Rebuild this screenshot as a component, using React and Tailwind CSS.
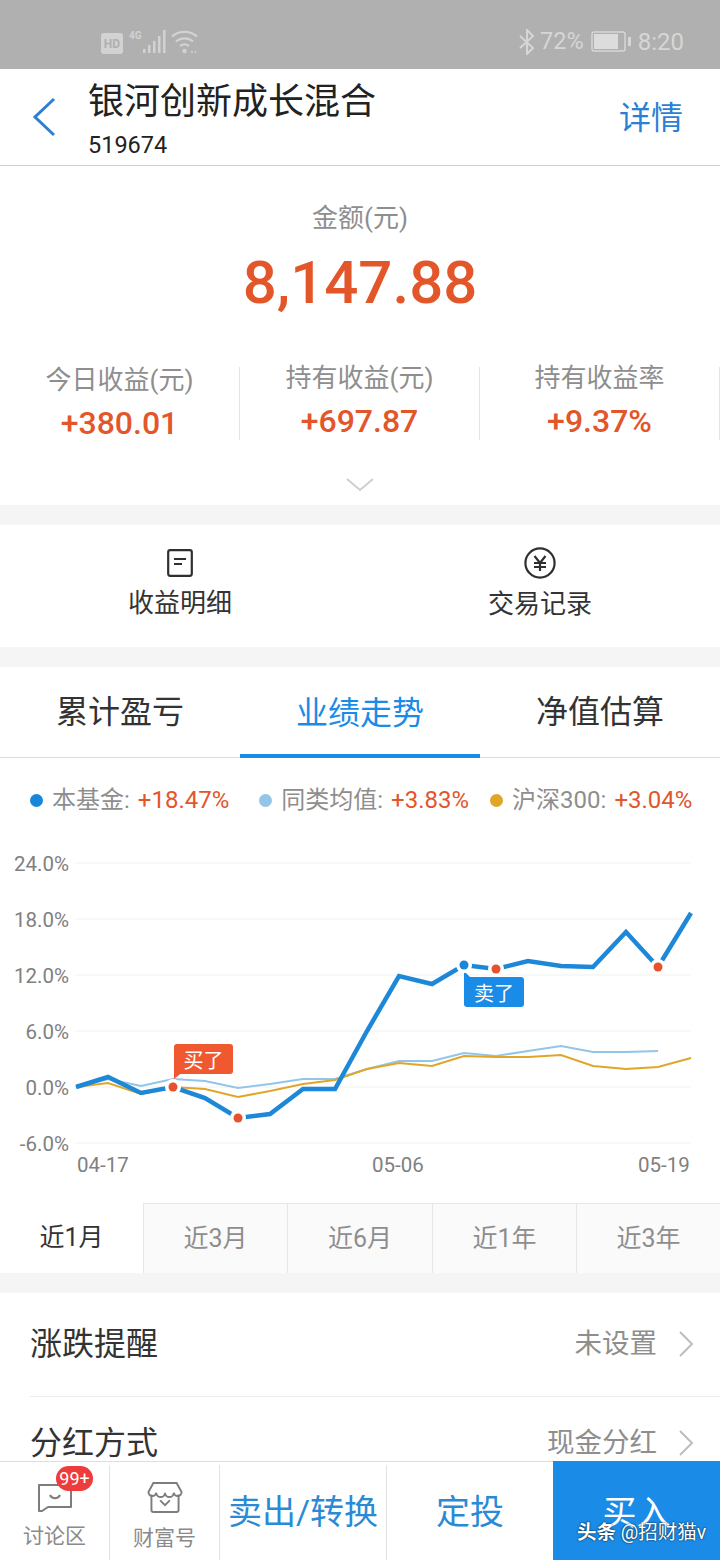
const FONT = "font-['Roboto','Noto_Sans_CJK_SC',sans-serif]";

const xs = [76,108,141,173,205,238,270,303,335,367,399,432,464,496,528,561,593,626,658,691];
const blue = [1087,1077,1093,1087,1098,1118,1114,1089,1089,1031,976,984,965,969,961,966,967,932,967,913];
const light = [1087,1079,1086,1079,1081,1088,1084,1079,1079,1069,1061,1061,1053,1056,1051,1046,1052,1052,1051];
const gold = [1087,1083,1094,1087,1089,1097,1091,1084,1080,1069,1063,1066,1056,1057,1057,1055,1066,1069,1067,1058];
const pts = (ys) => ys.map((y, i) => `${xs[i]},${y - 840}`).join(" ");

function StatusBar() {
  return (
    <div className="h-[69px] shrink-0 bg-[#b0b0b0] flex items-center justify-between pl-[100px] pr-[36px] pt-[14px] text-[#d6d6d6]">
      <div className="flex items-end gap-[3px]">
        <svg width="98" height="30" viewBox="0 0 98 30">
          <rect x="1" y="6" width="22" height="21" rx="3" fill="#d2d2d2" />
          <text x="12" y="21" textAnchor="middle" fontSize="12" fontWeight="700" fontFamily="Roboto" fill="#b0b0b0">HD</text>
          <text x="29" y="12" fontSize="10" fontWeight="700" fontFamily="Roboto" fill="#d2d2d2">4G</text>
          <g fill="#d2d2d2">
            <rect x="43" y="22" width="2.5" height="4" />
            <rect x="48" y="18" width="2.5" height="8" />
            <rect x="53" y="14" width="2.5" height="12" />
            <rect x="58" y="9" width="2.5" height="17" />
            <rect x="63" y="3" width="2.5" height="23" />
          </g>
          <g fill="none" stroke="#d2d2d2" strokeWidth="2.2">
            <path d="M72 9.5a19 19 0 0 1 25 0" />
            <path d="M76 14.5a13 13 0 0 1 17 0" />
            <path d="M80 19a7 7 0 0 1 9 0" />
          </g>
          <circle cx="84.5" cy="24" r="2.2" fill="#d2d2d2" />
          <circle cx="92" cy="25" r="1" fill="#d2d2d2" />
          <circle cx="95.5" cy="25" r="1" fill="#d2d2d2" />
        </svg>
      </div>
      <div className="flex items-center leading-none">
        <svg width="18" height="26" viewBox="0 0 18 26" fill="none" stroke="#d6d6d6" strokeWidth="2" className="mr-[4px]">
          <path d="M2 7l13 12-6 6V1l6 6L2 19" />
        </svg>
        <span className="text-[23.5px]">72%</span>
        <svg width="40" height="22" viewBox="0 0 40 22" className="ml-[7px]">
          <rect x="1" y="1" width="33" height="19" rx="2" fill="none" stroke="#d6d6d6" strokeWidth="1.5" />
          <rect x="3" y="3" width="24" height="15" fill="#dcdcdc" />
          <rect x="37" y="6" width="3" height="9" fill="#d6d6d6" />
        </svg>
        <span className="ml-[7px] text-[24px]">8:20</span>
      </div>
    </div>
  );
}

function Header() {
  return (
    <div className="h-[97px] shrink-0 bg-white border-b border-[#cfcfcf] flex items-start relative pl-[88px] pr-[37px]">
      <svg width="26" height="40" viewBox="0 0 26 40" fill="none" stroke="#2a7fd6" strokeWidth="3" className="absolute left-[31px] top-[28px]">
        <path d="M23 2L4 20l19 18" />
      </svg>
      <div className="flex-1 min-w-0">
        <div className="text-[36px] leading-[42px] mt-[12px] text-[#222]">银河创新成长混合</div>
        <div className="text-[23.5px] leading-[28px] mt-[8px] text-[#222]">519674</div>
      </div>
      <div className="text-[32px] leading-[40px] mt-[29px] text-[#2a7fd6]">详情</div>
    </div>
  );
}

function Stat({ label, value, first }) {
  return (
    <div className="flex-1 h-[73px] border-r border-[#e4e4e4] flex flex-col items-center">
      <div className={first ? "text-[26px] leading-[30px] text-[#8e8e8e] mt-[-2px]" : "text-[26px] leading-[30px] text-[#8e8e8e] mt-[-4px]"}>{label}</div>
      <div className="text-[32px] leading-[40px] mt-[8px] font-medium text-[#e2562a]">{value}</div>
    </div>
  );
}

function Summary() {
  return (
    <div className="h-[339px] shrink-0 bg-white flex flex-col items-center">
      <div className="text-[26px] leading-[30px] text-[#8e8e8e] mt-[37px]">金额(元)</div>
      <div className="text-[60px] leading-[70px] font-medium text-[#e2562a] mt-[15px]">8,147.88</div>
      <div className="flex w-full mt-[49px]">
        <Stat first label="今日收益(元)" value="+380.01" />
        <Stat label="持有收益(元)" value="+697.87" />
        <Stat label="持有收益率" value="+9.37%" />
      </div>
      <svg width="28" height="14" viewBox="0 0 28 14" fill="none" stroke="#cfcfcf" strokeWidth="2" className="mt-[38px]">
        <path d="M1 1l13 11L27 1" />
      </svg>
    </div>
  );
}

function Actions() {
  return (
    <div className="h-[122px] shrink-0 bg-white flex mt-[20px]">
      <div className="flex-1 flex flex-col items-center pt-[24px]">
        <svg width="26" height="28" viewBox="0 0 26 28" fill="none" stroke="#2f2f2f" strokeWidth="2.2">
          <rect x="1.2" y="1.2" width="23.6" height="25.6" rx="2" />
          <path d="M7 10h12M7 15h8" />
        </svg>
        <div className="text-[26px] leading-[30px] mt-[11px] text-[#333]">收益明细</div>
      </div>
      <div className="flex-1 flex flex-col items-center pt-[22px]">
        <svg width="32" height="32" viewBox="0 0 32 32" fill="none" stroke="#2f2f2f" strokeWidth="2.2">
          <circle cx="16" cy="16" r="14.6" />
          <path d="M10.5 9l5.5 7 5.5-7M16 16v8M10 16h12M10 20h12" />
        </svg>
        <div className="text-[26px] leading-[30px] mt-[10px] text-[#333]">交易记录</div>
      </div>
    </div>
  );
}

function Tabs() {
  return (
    <div className="h-[91px] shrink-0 bg-white flex mt-[20px] border-b border-[#dcdcdc]">
      <div className="flex-1 flex items-center justify-center text-[32px] text-[#333]">累计盈亏</div>
      <div className="flex-1 flex items-center justify-center text-[32px] text-[#1a8ce8] border-b-[4px] border-[#1a8ce8] h-[91px] pt-[4px]">业绩走势</div>
      <div className="flex-1 flex items-center justify-center text-[32px] text-[#333]">净值估算</div>
    </div>
  );
}

function Legend({ color, name, value, className }) {
  return (
    <div className={`flex items-center whitespace-nowrap ${className}`}>
      <span className={`w-[13px] h-[13px] rounded-full mr-[9px] ${color}`} />
      <span className="text-[24px] text-[#8e8e8e]">{name}</span>
      <span className="text-[24px] text-[#e2562a] ml-[8px]">{value}</span>
    </div>
  );
}

function Chart() {
  const labels = ["24.0%", "18.0%", "12.0%", "6.0%", "0.0%", "-6.0%"];
  const ys = [23, 79, 135, 191, 247, 303];
  const dots = [[173,1087,"#e8512e"],[238,1118,"#e8512e"],[496,969,"#e8512e"],[658,967,"#e8512e"],[464,965,"#1a86d8"]];
  return (
    <div className="relative h-[363px] shrink-0 bg-white">
      <svg width="720" height="363" viewBox="0 0 720 363" className="block" fontFamily="Roboto">
        {ys.map((y) => <line key={y} x1="76" x2="691" y1={y} y2={y} stroke="#f6f6f6" strokeWidth="1.5" />)}
        {labels.map((t, i) => (
          <text key={t} x="69" y={ys[i] + 8} textAnchor="end" fontSize="20.5" fill="#808080">{t}</text>
        ))}
        <text x="77" y="332" fontSize="20.5" fill="#808080">04-17</text>
        <text x="372" y="332" fontSize="20.5" fill="#808080">05-06</text>
        <text x="638" y="332" fontSize="20.5" fill="#808080">05-19</text>
        <polyline points={pts(light)} fill="none" stroke="#93c5e8" strokeWidth="2" />
        <polyline points={pts(gold)} fill="none" stroke="#e0a62a" strokeWidth="2" />
        <polyline points={pts(blue)} fill="none" stroke="#1e88d8" strokeWidth="4.5" strokeLinejoin="miter" />
        <path d="M174 239v-8h10z" fill="#f0582f" />
        <path d="M464 131v10h10z" fill="#1a8ce8" />
        {dots.map(([x, y, c]) => (
          <g key={x}>
            <circle cx={x} cy={y - 840} r="8" fill="#fff" />
            <circle cx={x} cy={y - 840} r="4.5" fill={c} />
          </g>
        ))}
      </svg>
      <div className="absolute left-[174px] top-[204px] w-[59px] h-[30px] pt-[3px] rounded-[3px] bg-[#f0582f] text-white text-[20px] flex items-center justify-center">买了</div>
      <div className="absolute left-[464px] top-[137px] w-[60px] h-[30px] pt-[3px] rounded-[3px] bg-[#1a8ce8] text-white text-[20px] flex items-center justify-center">卖了</div>
    </div>
  );
}

function Ranges() {
  return (
    <div className="flex h-[70px] shrink-0 bg-white">
      <div className="w-[143px] flex items-center justify-center text-[25px] text-[#333]">近1月</div>
      <div className="w-[144px] border-t border-l border-[#e6e6e6] bg-[#fafafa] flex items-center justify-center text-[25px] text-[#8e8e8e]">近3月</div>
      <div className="w-[145px] border-t border-l border-[#e6e6e6] bg-[#fafafa] flex items-center justify-center text-[25px] text-[#8e8e8e]">近6月</div>
      <div className="w-[144px] border-t border-l border-[#e6e6e6] bg-[#fafafa] flex items-center justify-center text-[25px] text-[#8e8e8e]">近1年</div>
      <div className="flex-1 border-t border-l border-[#e6e6e6] bg-[#fafafa] flex items-center justify-center text-[25px] text-[#8e8e8e]">近3年</div>
    </div>
  );
}

function Row({ title, value, divider }) {
  return (
    <div className={divider ? "h-[104px] ml-[30px] border-b border-[#ececec] flex items-center pr-[26px] pb-[2px]" : "h-[92px] ml-[30px] flex items-center pr-[26px]"}>
      <div className="flex-1 text-[32px] text-[#333]">{title}</div>
      <div className="text-[27.5px] text-[#8e8e8e]">{value}</div>
      <svg width="16" height="26" viewBox="0 0 16 26" fill="none" stroke="#bdbdbd" strokeWidth="2" className="ml-[21px]">
        <path d="M2 1l12 12L2 25" />
      </svg>
    </div>
  );
}

function BottomBar() {
  return (
    <div className="absolute left-0 right-0 bottom-0 h-[99px] bg-white border-t border-[#dedede] flex">
      <div className="relative w-[110px] border-r border-[#e2e2e2] flex flex-col items-center mt-[3px]">
        <svg width="36" height="29" viewBox="0 0 36 29" fill="none" stroke="#7d7d7d" strokeWidth="2" className="mt-[18px]">
          <path d="M2 2h32v22H11l-6 4H2z" strokeLinejoin="round" />
          <path d="M13 12a5.5 5.5 0 0 0 10 0" />
        </svg>
        <div className="text-[21px] leading-[26px] mt-[11px] text-[#8a8a8a]">讨论区</div>
        <div className="absolute left-[56px] top-[1px] w-[37px] h-[25px] rounded-[13px] bg-[#ee3b3b] text-white text-[18px] leading-[25px] text-center">99+</div>
      </div>
      <div className="w-[110px] border-r border-[#e2e2e2] flex flex-col items-center mt-[3px]">
        <svg width="36" height="31" viewBox="0 0 36 32" fill="none" stroke="#7d7d7d" strokeWidth="2" className="mt-[17px]">
          <path d="M6 1h24l5 9a4 4 0 0 1-8 1 4.5 4.5 0 0 1-9 0 4.5 4.5 0 0 1-9 0 4 4 0 0 1-8-1z" />
          <path d="M4 13v16a2 2 0 0 0 2 2h24a2 2 0 0 0 2-2V13" />
          <path d="M13 19l5 5 5-5" />
        </svg>
        <div className="text-[21px] leading-[26px] mt-[12px] text-[#8a8a8a]">财富号</div>
      </div>
      <div className="w-[167px] border-r border-[#e2e2e2] flex items-center justify-center text-[34px] text-[#2a8ad6] mt-[3px] whitespace-nowrap">卖出/转换</div>
      <div className="w-[166px] flex items-center justify-center text-[34px] text-[#2a8ad6] pt-[3px]">定投</div>
      <div className="flex-1 -mt-px bg-[#1a8ce8] flex items-center justify-center text-[34px] text-white pt-[5px]">买入</div>
      <div className="absolute left-[577px] top-[59px] text-[19.5px] leading-[24px] text-white whitespace-nowrap [text-shadow:0_0_2px_#000]"><span className="font-bold">头条</span> @招财猫v</div>
    </div>
  );
}

export default function App() {
  return (
    <div className={`relative w-[720px] h-[1560px] overflow-hidden bg-[#f5f5f5] flex flex-col ${FONT}`}>
      <StatusBar />
      <Header />
      <Summary />
      <Actions />
      <Tabs />
      <div className="h-[82px] shrink-0 bg-white flex items-center pl-[30px] pt-[2px]">
        <Legend className="" color="bg-[#1a86d8]" name="本基金:" value="+18.47%" />
        <Legend className="ml-[30px]" color="bg-[#93c5e8]" name="同类均值:" value="+3.83%" />
        <Legend className="ml-[21px]" color="bg-[#e0a62a]" name="沪深300:" value="+3.04%" />
      </div>
      <Chart />
      <Ranges />
      <div className="mt-[20px] bg-white flex-1">
        <Row divider title="涨跌提醒" value="未设置" />
        <Row title="分红方式" value="现金分红" />
      </div>
      <BottomBar />
    </div>
  );
}
